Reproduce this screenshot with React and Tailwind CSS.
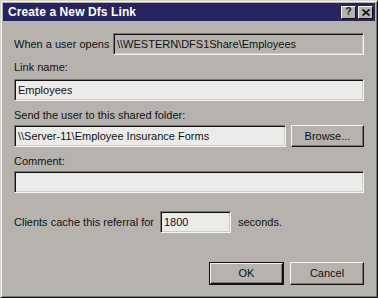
import React from 'react';

const font = { fontFamily: '"Liberation Sans", Arial, sans-serif' };

const Field = ({ value, className = '', readOnly }) => (
  <div
    className={`h-[22px] flex items-center px-[3px] text-[11px] text-[#111] border border-t-[#7a7773] border-l-[#7a7773] border-b-[#f4f4f4] border-r-[#f4f4f4] shadow-[inset_1px_1px_0_#111,inset_-1px_-1px_0_#cfccc8] ${readOnly ? 'bg-[#b6b3af]' : 'bg-[#ebebea]'} ${className}`}
  >
    <span className="truncate">{value}</span>
  </div>
);

const Button = ({ children, isDefault, className = '' }) => (
  <div className={`${isDefault ? 'border border-[#111]' : ''} ${className}`}>
    <div className="h-full flex items-center justify-center text-[11px] text-[#111] bg-[#b6b3af] border border-t-[#f4f4f4] border-l-[#f4f4f4] border-b-[#111] border-r-[#111] shadow-[inset_-1px_-1px_0_#7a7773]">
      {children}
    </div>
  </div>
);

export default function App() {
  return (
    <div className="w-[378px] h-[298px] bg-[#b6b3af] border border-t-[#d6d3cf] border-l-[#d6d3cf] border-b-[#111] border-r-[#111] shadow-[inset_1px_1px_0_#f4f4f4,inset_-1px_-1px_0_#7a7773] p-[2px] flex flex-col" style={font}>
      <div className="h-[18px] bg-[#29245f] flex items-center justify-between pl-[5px] pr-[2px]">
        <span className="text-white text-[12px] font-bold tracking-[0.1px]">Create a New Dfs Link</span>
        <div className="flex gap-[2px]">
          <div className="w-[15px] h-[13px] bg-[#b6b3af] border border-t-[#f4f4f4] border-l-[#f4f4f4] border-b-[#111] border-r-[#111] flex items-center justify-center text-[10px] font-bold text-[#111] leading-none">?</div>
          <div className="w-[15px] h-[13px] bg-[#b6b3af] border border-t-[#f4f4f4] border-l-[#f4f4f4] border-b-[#111] border-r-[#111] flex items-center justify-center">
            <svg width="8" height="7" viewBox="0 0 8 7">
              <path d="M0.5 0.5 L7.5 6.5 M7.5 0.5 L0.5 6.5" stroke="#111" strokeWidth="1.6" />
            </svg>
          </div>
        </div>
      </div>

      <div className="flex flex-col px-[11px] pt-[12px] text-[11px] text-[#111]">
        <div className="flex items-center">
          <span className="w-[99px]">When a user opens</span>
          <Field readOnly value="\\WESTERN\DFS1Share\Employees" className="flex-1" />
        </div>

        <span className="mt-[6px] leading-[13px]">Link name:</span>
        <Field value="Employees" className="mt-[5px]" />

        <span className="mt-[8px] leading-[13px]">Send the user to this shared folder:</span>
        <div className="flex gap-[5px] mt-[3px]">
          <Field value="\\Server-11\Employee Insurance Forms" className="flex-1" />
          <Button className="w-[73px] h-[22px]">Browse...</Button>
        </div>

        <span className="mt-[8px] leading-[13px]">Comment:</span>
        <Field value="" className="mt-[3px]" />

        <div className="flex items-center mt-[18px]">
          <span className="w-[146px]">Clients cache this referral for</span>
          <Field value="1800" className="w-[71px]" />
          <span className="ml-[7px]">seconds.</span>
        </div>

        <div className="flex justify-end gap-[6px] mt-[29px]">
          <Button isDefault className="w-[75px] h-[23px]">OK</Button>
          <Button className="w-[74px] h-[23px]">Cancel</Button>
        </div>
      </div>
    </div>
  );
}
